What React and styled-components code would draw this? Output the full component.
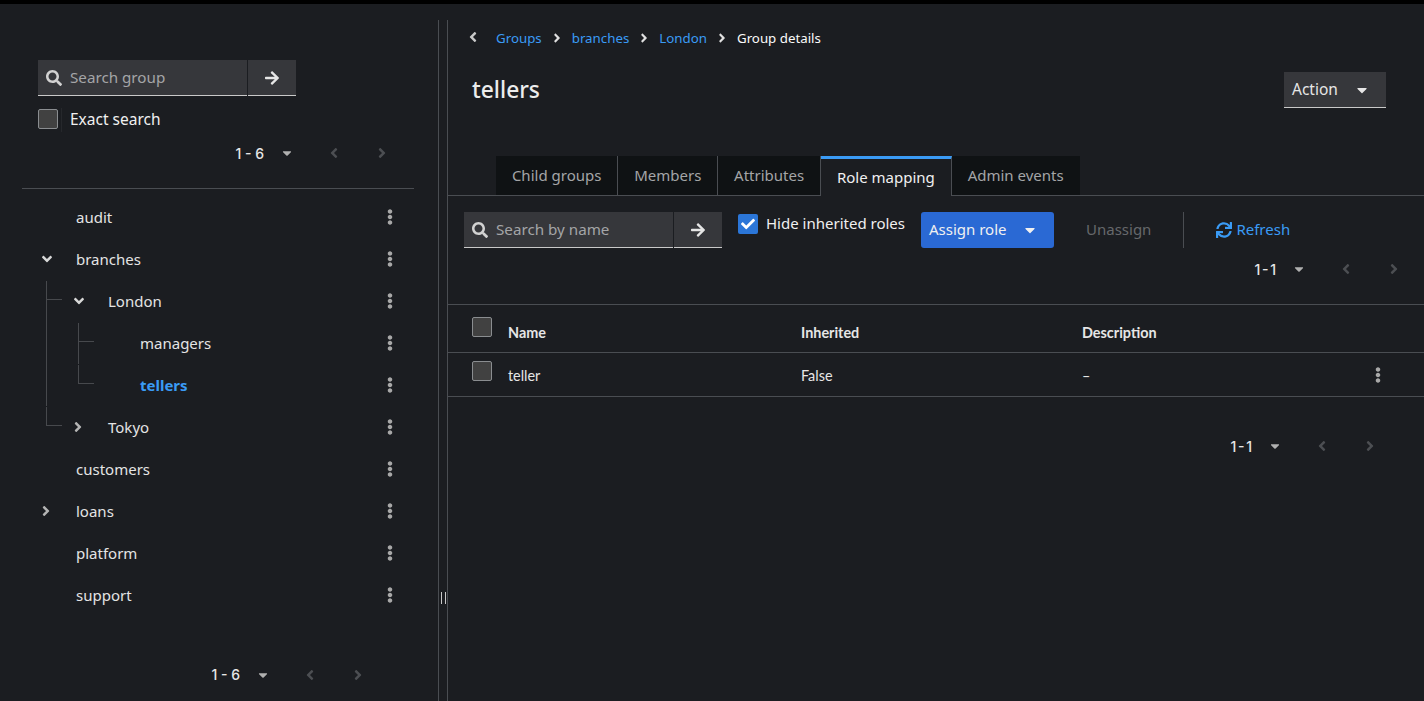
import styled, { createGlobalStyle } from "styled-components";
import {
  FaSearch,
  FaArrowRight,
  FaAngleDown,
  FaAngleRight,
  FaAngleLeft,
  FaCaretDown,
  FaEllipsisV,
  FaSync,
  FaCheck,
} from "react-icons/fa";

const Global = createGlobalStyle`
  html, body {
    margin: 0;
    padding: 0;
    height: 100%;
    background: #1b1d21;
    overflow: hidden;
  }
  body {
    font-family: "Noto Sans", sans-serif;
    color: #e0e0e0;
  }
  * { box-sizing: border-box; }
`;

const groups = [
  { name: "audit" },
  {
    name: "branches",
    open: true,
    children: [
      {
        name: "London",
        open: true,
        children: [{ name: "managers" }, { name: "tellers", active: true }],
      },
      { name: "Tokyo", closed: true },
    ],
  },
  { name: "customers" },
  { name: "loans", closed: true },
  { name: "platform" },
  { name: "support" },
];

const SearchBox = ({ placeholder }) => (
  <SearchGroup>
    <SearchInput>
      <FaSearch size={16} />
      <span>{placeholder}</span>
    </SearchInput>
    <SearchGo>
      <FaArrowRight size={16} />
    </SearchGo>
  </SearchGroup>
);

const Pager = ({ label, compact }) => (
  <Pagination>
    <PageLabel $compact={compact}>{label}</PageLabel>
    <PageCaret>
      <FaCaretDown size={14} />
    </PageCaret>
    <PageArrow>
      <FaAngleLeft size={16} />
    </PageArrow>
    <PageArrow>
      <FaAngleRight size={16} />
    </PageArrow>
  </Pagination>
);

const TreeNode = ({ item, level }) => (
  <TreeItem $level={level}>
    <TreeRow $level={level}>
      <Toggle $closed={item.closed}>
        {item.open && <FaAngleDown size={16} />}
        {item.closed && <FaAngleRight size={16} />}
      </Toggle>
      <TreeName $active={item.active}>{item.name}</TreeName>
      <Kebab>
        <FaEllipsisV size={16} />
      </Kebab>
    </TreeRow>
    {item.children && (
      <TreeList>
        {item.children.map((child) => (
          <TreeNode key={child.name} item={child} level={level + 1} />
        ))}
      </TreeList>
    )}
  </TreeItem>
);

const App = () => {
  return (
    <>
      <Global />
      <TopBar />
      <Main>
        <LeftPanel>
          <LeftTools>
            <SearchBox placeholder="Search group" />
            <ExactRow>
              <Checkbox />
              <CheckRule />
              <span>Exact search</span>
            </ExactRow>
            <PagerRow $right={25}>
              <Pager label="1 - 6" />
            </PagerRow>
          </LeftTools>
          <TreeList>
            {groups.map((item) => (
              <TreeNode key={item.name} item={item} level={0} />
            ))}
          </TreeList>
          <LeftFooter>
            <Pager label="1 - 6" />
          </LeftFooter>
          <Grip />
        </LeftPanel>
        <Gutter />
        <RightPanel>
          <Breadcrumbs>
            <BackIcon>
              <FaAngleLeft size={16} />
            </BackIcon>
            <Crumb>Groups</Crumb>
            <CrumbSep>
              <FaAngleRight size={14} />
            </CrumbSep>
            <Crumb>branches</Crumb>
            <CrumbSep>
              <FaAngleRight size={14} />
            </CrumbSep>
            <Crumb>London</Crumb>
            <CrumbSep>
              <FaAngleRight size={14} />
            </CrumbSep>
            <CurrentCrumb>Group details</CurrentCrumb>
          </Breadcrumbs>
          <TitleRow>
            <Title>tellers</Title>
            <ActionButton>
              <span>Action</span>
              <FaCaretDown size={16} />
            </ActionButton>
          </TitleRow>
          <Tabs>
            <Tab>Child groups</Tab>
            <Tab>Members</Tab>
            <Tab>Attributes</Tab>
            <Tab $active>Role mapping</Tab>
            <Tab>Admin events</Tab>
          </Tabs>
          <Toolbar>
            <SearchBox placeholder="Search by name" />
            <HideRow>
              <Checkbox $checked>
                <FaCheck size={14} />
              </Checkbox>
              <span>Hide inherited roles</span>
            </HideRow>
            <AssignButton>
              <span>Assign role</span>
              <FaCaretDown size={16} />
            </AssignButton>
            <UnassignButton>Unassign</UnassignButton>
            <ToolDivider />
            <RefreshButton>
              <FaSync size={16} />
              <span>Refresh</span>
            </RefreshButton>
          </Toolbar>
          <PagerRow $right={23} $top={4} $height={34} $bottom={18}>
            <Pager label="1 - 1" compact />
          </PagerRow>
          <Table>
            <TableRow $header>
              <CheckCell $header>
                <Checkbox />
              </CheckCell>
              <span>Name</span>
              <span>Inherited</span>
              <span>Description</span>
              <span />
            </TableRow>
            <TableRow>
              <CheckCell>
                <Checkbox />
              </CheckCell>
              <span>teller</span>
              <span>False</span>
              <span>–</span>
              <RowKebab>
                <FaEllipsisV size={16} />
              </RowKebab>
            </TableRow>
          </Table>
          <PagerRow $right={47} $top={31} $height={36}>
            <Pager label="1 - 1" compact />
          </PagerRow>
        </RightPanel>
      </Main>
    </>
  );
};

export default App;

const TopBar = styled.div`
  height: 4px;
  background: #000;
`;

const Main = styled.div`
  display: flex;
  height: 697px;
  padding-top: 16px;
`;

const LeftPanel = styled.aside`
  position: relative;
  width: 439px;
  flex: none;
  border-right: 1px solid #4a4d52;
  padding: 40px 24px 0 22px;
  display: flex;
  flex-direction: column;
`;

const Gutter = styled.div`
  width: 8px;
  flex: none;
`;

const Grip = styled.div`
  position: absolute;
  left: 441px;
  top: 572px;
  width: 5px;
  height: 12px;
  border-left: 1px solid #c8c8c8;
  border-right: 1px solid #c8c8c8;
`;

const LeftTools = styled.div`
  padding-left: 16px;
  border-bottom: 1px solid #4a4d52;
  margin-bottom: 7px;
  height: 129px;
`;

const SearchGroup = styled.div`
  display: flex;
  gap: 1px;
  width: 258px;
  height: 36px;
  flex: none;
`;

const SearchInput = styled.div`
  flex: 1;
  display: flex;
  align-items: center;
  gap: 8px;
  padding-left: 8px;
  background: #36373b;
  border-bottom: 1px solid #c9c9c9;
  font-size: 15.2px;
  color: #a4a5a7;
  span {
    padding-bottom: 2px;
  }
  svg {
    color: #d2d2d2;
  }
`;

const SearchGo = styled.div`
  width: 48px;
  display: flex;
  align-items: center;
  justify-content: center;
  background: #36373b;
  border-bottom: 1px solid #c9c9c9;
  color: #e6e6e6;
`;

const ExactRow = styled.label`
  display: flex;
  align-items: center;
  margin-top: 12px;
  height: 22px;
  font-size: 15.5px;
  color: #f0f0f0;
`;

const CheckRule = styled.span`
  width: 1px;
  height: 24px;
  margin: 2px 8px 0 3px;
  background: #26282c;
`;

const Checkbox = styled.span`
  width: 20px;
  height: 20px;
  flex: none;
  display: flex;
  align-items: center;
  justify-content: center;
  border-radius: 2px;
  border: ${(p) => (p.$checked ? "0" : "1px solid #8a8d90")};
  background: ${(p) => (p.$checked ? "#2b76d8" : "#414141")};
  color: #fff;
`;

const PagerRow = styled.div`
  display: flex;
  justify-content: flex-end;
  align-items: center;
  height: ${(p) => p.$height || 36}px;
  margin-top: ${(p) => p.$top || 5}px;
  margin-bottom: ${(p) => p.$bottom || 0}px;
  padding-right: ${(p) => p.$right}px;
`;

const Pagination = styled.div`
  display: flex;
  align-items: center;
`;

const PageLabel = styled.span`
  font-family: "Inter", sans-serif;
  font-weight: 500;
  font-size: 14px;
  color: #e6e6e6;
  white-space: pre;
  word-spacing: ${(p) => (p.$compact ? "-2px" : "0")};
`;

const PageCaret = styled.span`
  display: flex;
  margin-left: 16px;
  margin-right: 33px;
  color: #b0b0b0;
`;

const PageArrow = styled.span`
  display: flex;
  width: 14px;
  justify-content: center;
  margin-right: 34px;
  color: #4c4e52;
  &:last-child {
    margin-right: 0;
  }
`;

const TreeList = styled.div`
  display: flex;
  flex-direction: column;
`;

const TreeItem = styled.div`
  position: relative;
  ${(p) =>
    p.$level > 0 &&
    `
    &::before {
      content: "";
      position: absolute;
      left: ${24 + (p.$level - 1) * 32}px;
      top: 1px;
      bottom: 0;
      width: 1px;
      background: #47494d;
    }
    &:last-child::before {
      bottom: auto;
      height: 19px;
    }
    &::after {
      content: "";
      position: absolute;
      left: ${24 + (p.$level - 1) * 32}px;
      top: 19px;
      width: 16px;
      height: 1px;
      background: #47494d;
    }
  `}
`;

const TreeRow = styled.div`
  display: flex;
  align-items: center;
  height: 42px;
  padding-left: ${(p) => p.$level * 32}px;
`;

const Toggle = styled.span`
  width: 54px;
  flex: none;
  padding-left: ${(p) => (p.$closed ? "15.5px" : "16.5px")};
  display: flex;
  color: ${(p) => (p.$closed ? "#b4b4b4" : "#d8d8d8")};
`;

const TreeName = styled.span`
  flex: 1;
  font-size: 15px;
  font-weight: ${(p) => (p.$active ? 700 : 400)};
  color: ${(p) => (p.$active ? "#3a9bf5" : "#e4e4e4")};
`;

const Kebab = styled.span`
  width: 48px;
  display: flex;
  justify-content: center;
  color: #a8a8a8;
`;

const LeftFooter = styled.div`
  display: flex;
  justify-content: flex-end;
  padding-right: 49px;
  margin-top: 50px;
`;

const RightPanel = styled.main`
  flex: 1;
  min-width: 0;
  border-left: 1px solid #4a4d52;
`;

const Breadcrumbs = styled.nav`
  display: flex;
  align-items: center;
  height: 36px;
  padding-left: 16.5px;
  font-size: 13.3px;
`;

const BackIcon = styled.span`
  display: flex;
  width: 31.5px;
  margin-bottom: 2px;
  color: #c8c8c8;
`;

const Crumb = styled.a`
  color: #3a9bf5;
`;

const CrumbSep = styled.span`
  display: flex;
  margin: 0 8px;
  color: #e0e0e0;
`;

const CurrentCrumb = styled.span`
  color: #fafafa;
`;

const TitleRow = styled.div`
  display: flex;
  justify-content: space-between;
  align-items: flex-start;
  padding: 16px 38px 0 24px;
  height: 100px;
`;

const Title = styled.h1`
  margin: 1px 0 0;
  font-size: 22.8px;
  font-weight: 500;
  line-height: 34px;
  color: #ececec;
`;

const ActionButton = styled.button`
  display: flex;
  align-items: center;
  justify-content: space-between;
  width: 102px;
  height: 36px;
  padding: 0 16px 0 8px;
  border: 0;
  border-bottom: 1px solid #c9c9c9;
  background: #36373b;
  font: inherit;
  font-size: 15.5px;
  color: #e6e6e6;
  span {
    padding-bottom: 2px;
  }
`;

const Tabs = styled.div`
  display: flex;
  height: 40px;
  padding-left: 48px;
  border-bottom: 1px solid #4a4d52;
`;

const Tab = styled.div`
  display: flex;
  align-items: center;
  padding: 0 15.9px 2px;
  font-size: 15px;
  height: ${(p) => (p.$active ? "40px" : "39px")};
  background: ${(p) => (p.$active ? "#1b1d21" : "#0f1214")};
  color: ${(p) => (p.$active ? "#f0f0f0" : "#a4a5a7")};
  border-right: 1px solid #4a4d52;
  border-top: ${(p) => (p.$active ? "3px solid #3a9bf5" : "0")};
  &:last-child {
    border-right: 0;
  }
`;

const Toolbar = styled.div`
  display: flex;
  align-items: flex-start;
  padding: 16px 0 0 16px;
  height: 52px;
`;

const HideRow = styled.label`
  display: flex;
  align-items: center;
  gap: 8px;
  height: 24px;
  margin: 0 16px;
  font-size: 15px;
  color: #f0f0f0;
  span:last-child {
    padding-bottom: 2px;
  }
`;

const AssignButton = styled.button`
  display: flex;
  align-items: center;
  justify-content: space-between;
  width: 133px;
  height: 36px;
  padding: 0 16px 0 8px;
  border: 0;
  border-radius: 3px;
  background: #2a69d4;
  font: inherit;
  font-size: 15px;
  color: #f0f0f0;
  span {
    padding-bottom: 2px;
  }
`;

const UnassignButton = styled.span`
  display: flex;
  align-items: center;
  height: 36px;
  margin-left: 32px;
  padding-bottom: 2px;
  font-size: 15px;
  color: #66686b;
`;

const ToolDivider = styled.span`
  width: 1px;
  height: 36px;
  margin: 0 32px;
  background: #4a4d52;
`;

const RefreshButton = styled.span`
  display: flex;
  align-items: center;
  gap: 4px;
  height: 36px;
  font-size: 15px;
  color: #3a9bf5;
  span {
    padding-bottom: 2px;
  }
`;

const Table = styled.div`
  border-top: 1px solid #4a4d52;
`;

const TableRow = styled.div`
  display: grid;
  grid-template-columns: 60px 293px 281px 1fr 92px;
  align-items: center;
  height: ${(p) => (p.$header ? "48px" : "44px")};
  padding-top: ${(p) => (p.$header ? "8px" : "2px")};
  border-bottom: 1px solid #4a4d52;
  font-family: "Lato", sans-serif;
  font-size: 14.4px;
  font-weight: ${(p) => (p.$header ? 700 : 400)};
  color: #e6e6e6;
`;

const CheckCell = styled.div`
  padding-left: 24px;
  margin-top: ${(p) => (p.$header ? "-12px" : "-10px")};
`;

const RowKebab = styled.span`
  display: flex;
  justify-content: center;
  margin-top: -2px;
  color: #a8a8a8;
`;
